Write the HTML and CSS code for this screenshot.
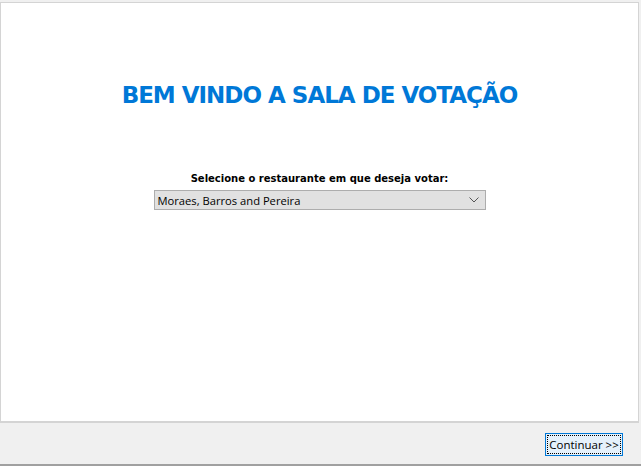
FILE: index.html
```html
<!DOCTYPE html>
<html>
<head>
<meta charset="utf-8">
<link rel="stylesheet" href="styles.css">
</head>
<body>
<div class="window">
  <div class="panel">
    <h1 class="title">BEM VINDO A SALA DE VOTAÇÃO</h1>
    <div class="form">
      <div class="label">Selecione o restaurante em que deseja votar:</div>
      <div class="combo">
        <span class="combo-text">Moraes, Barros and Pereira</span>
        <svg class="chev" width="10" height="6" viewBox="0 0 10 6"><path d="M0.5 0.5 L5 5 L9.5 0.5" fill="none" stroke="#555" stroke-width="1"/></svg>
      </div>
    </div>
  </div>
  <div class="footer">
    <button class="btn"><span class="focus">Continuar &gt;&gt;</span></button>
  </div>
</div>
</body>
</html>
```
FILE: styles.css
```css
html, body {
  margin: 0;
  padding: 0;
  background: #f0f0f0;
}
.window {
  width: 641px;
  height: 466px;
  display: flex;
  flex-direction: column;
  box-sizing: border-box;
  padding-top: 2px;
  border-bottom: 2px solid #a0a0a0;
}
.panel {
  height: 421px;
  width: 639px;
  box-sizing: border-box;
  background: #fff;
  border: 1px solid #d4d4d4;
  border-bottom: 2px solid #d4d4d4;
  display: flex;
  flex-direction: column;
  align-items: center;
}
.title {
  margin: 77px 0 0 0;
  font-family: "DejaVu Sans", Tahoma, sans-serif;
  font-weight: bold;
  font-size: 23px;
  color: #0078d7;
  letter-spacing: -1px;
  line-height: 30px;
}
.form {
  margin-top: 62px;
  display: flex;
  flex-direction: column;
  align-items: center;
}
.label {
  font-family: "DejaVu Sans", Tahoma, sans-serif;
  font-weight: bold;
  font-size: 10px;
  color: #000;
  line-height: 13px;
}
.combo {
  margin-top: 5px;
  width: 332px;
  height: 20px;
  box-sizing: border-box;
  background: #e1e1e1;
  border: 1px solid #adadad;
  display: flex;
  align-items: center;
  justify-content: space-between;
  padding: 0 6px 0 3px;
}
.combo-text {
  font-family: "Open Sans", "Segoe UI", sans-serif;
  font-size: 11.2px;
  color: #000;
}
.footer {
  flex: 1;
  display: flex;
  justify-content: flex-end;
  align-items: center;
  padding-right: 18px;
}
.btn {
  width: 78px;
  height: 23px;
  box-sizing: border-box;
  background: #e5f1fb;
  border: 1px solid #0078d7;
  padding: 1px;
  display: flex;
  margin-top: 1px;
}
.focus {
  flex: 1;
  border: 1px dotted #000;
  font-family: "Open Sans", "Segoe UI", sans-serif;
  font-size: 11.5px;
  color: #000;
  line-height: 17px;
  text-align: center;
  white-space: nowrap;
}
```
